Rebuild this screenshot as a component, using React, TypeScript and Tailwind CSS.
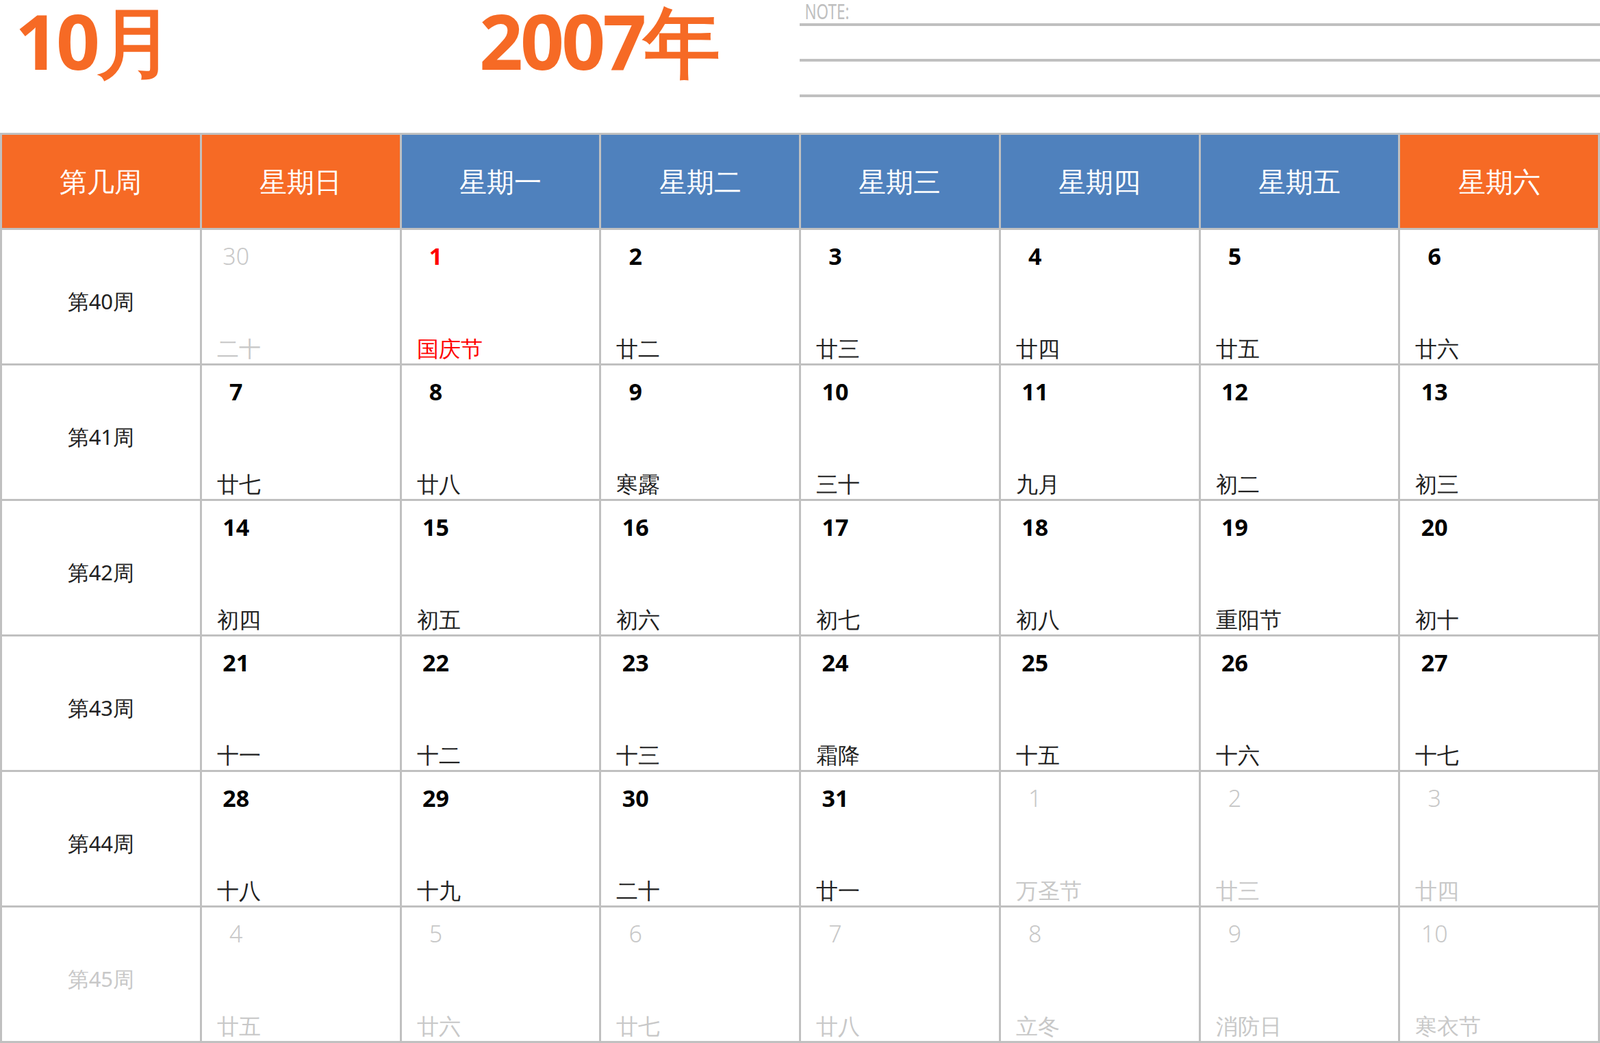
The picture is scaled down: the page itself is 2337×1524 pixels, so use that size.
import React from "react";

const OR = "bg-[#F66A25]";
const BL = "bg-[#4F81BD]";
const heads = [
  ["第几周", OR], ["星期日", OR], ["星期一", BL], ["星期二", BL], ["星期三", BL], ["星期四", BL], ["星期五", BL], ["星期六", OR],
];
type C = { d: string; l: string; g?: boolean; r?: boolean };
const rows: { w: string; g?: boolean; c: C[] }[] = [
  { w: "第40周", c: [{ d: "30", l: "二十", g: true }, { d: "1", l: "国庆节", r: true }, { d: "2", l: "廿二" }, { d: "3", l: "廿三" }, { d: "4", l: "廿四" }, { d: "5", l: "廿五" }, { d: "6", l: "廿六" }] },
  { w: "第41周", c: [{ d: "7", l: "廿七" }, { d: "8", l: "廿八" }, { d: "9", l: "寒露" }, { d: "10", l: "三十" }, { d: "11", l: "九月" }, { d: "12", l: "初二" }, { d: "13", l: "初三" }] },
  { w: "第42周", c: [{ d: "14", l: "初四" }, { d: "15", l: "初五" }, { d: "16", l: "初六" }, { d: "17", l: "初七" }, { d: "18", l: "初八" }, { d: "19", l: "重阳节" }, { d: "20", l: "初十" }] },
  { w: "第43周", c: [{ d: "21", l: "十一" }, { d: "22", l: "十二" }, { d: "23", l: "十三" }, { d: "24", l: "霜降" }, { d: "25", l: "十五" }, { d: "26", l: "十六" }, { d: "27", l: "十七" }] },
  { w: "第44周", c: [{ d: "28", l: "十八" }, { d: "29", l: "十九" }, { d: "30", l: "二十" }, { d: "31", l: "廿一" }, { d: "1", l: "万圣节", g: true }, { d: "2", l: "廿三", g: true }, { d: "3", l: "廿四", g: true }] },
  { w: "第45周", g: true, c: [{ d: "4", l: "廿五", g: true }, { d: "5", l: "廿六", g: true }, { d: "6", l: "廿七", g: true }, { d: "7", l: "廿八", g: true }, { d: "8", l: "立冬", g: true }, { d: "9", l: "消防日", g: true }, { d: "10", l: "寒衣节", g: true }] },
];
const serif = "font-['Liberation_Serif','Noto_Sans_CJK_SC',serif]";
const cjk = "font-['Noto_Sans_CJK_SC',sans-serif]";

export default function App() {
  return (
    <div className="w-[2337px] h-[1524px] bg-white overflow-hidden">
      <div className="h-[194px] flex">
        <div className={`w-[700px] pl-[22px] text-[112px] leading-[130px] -mt-[6px] font-bold text-[#F66A25] tracking-[-4px] ${cjk}`}>10月</div>
        <div className={`w-[468px] text-[112px] leading-[130px] -mt-[6px] font-bold text-[#F66A25] tracking-[-4px] ${cjk}`}>2007年</div>
        <div className="flex-1 flex flex-col">
          <div className={`h-[34px] pl-[10px] text-[30px] leading-[34px] text-[#bfbfbf] scale-x-75 origin-left ${serif}`}>NOTE:</div>
          <div className="h-[4px] bg-[#c0c0c0]" />
          <div className="h-[48px]" />
          <div className="h-[4px] bg-[#c0c0c0]" />
          <div className="h-[48px]" />
          <div className="h-[4px] bg-[#c0c0c0]" />
        </div>
      </div>
      <div className="grid grid-cols-8 gap-[3px] bg-[#c0c0c0] p-[3px] grid-rows-[136px_repeat(6,195px)]">
        {heads.map(([t, c]) => (
          <div key={t} className={`${c} flex items-center justify-center text-white text-[40px] font-light ${cjk}`}>{t}</div>
        ))}
        {rows.map((r) => (
          <React.Fragment key={r.w}>
            <div className={`bg-white flex items-center justify-center pt-[14px] text-[31px] ${r.g ? "text-[#c8c8c8]" : "text-[#222]"} ${serif}`}>{r.w}</div>
            {r.c.map((c, i) => (
              <div key={i} className="bg-white flex flex-col justify-between pl-[22px] pt-[18px] pb-[0px]">
                <div className={`w-[56px] text-center text-[34px] leading-[40px] ${c.g ? `text-[#c8c8c8] font-light ${serif}` : `font-bold ${cjk} ${c.r ? "text-[#FF0000]" : "text-black"}`}`}>{c.d}</div>
                <div className={`text-[32px] leading-[44px] font-light ${cjk} ${c.g ? "text-[#c8c8c8]" : c.r ? "text-[#FF0000]" : "text-[#222]"}`}>{c.l}</div>
              </div>
            ))}
          </React.Fragment>
        ))}
      </div>
    </div>
  );
}
